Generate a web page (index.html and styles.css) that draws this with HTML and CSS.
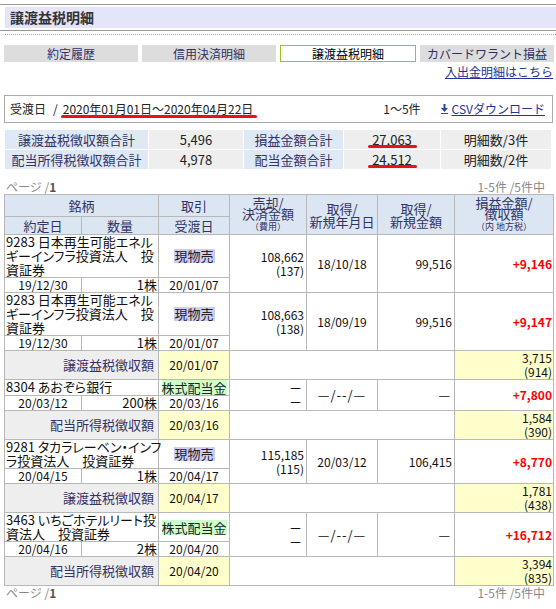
FILE: index.html
```html
<!DOCTYPE html>
<html lang="ja">
<head>
<meta charset="utf-8">
<title>譲渡益税明細</title>
<link rel="stylesheet" href="styles.css">
</head>
<body>
<div class="titlebar"><h1>譲渡益税明細</h1></div>
<div class="dots"></div>
<div class="content">
  <ul class="tabs">
    <li>約定履歴</li>
    <li>信用決済明細</li>
    <li class="active">譲渡益税明細</li>
    <li>カバードワラント損益</li>
  </ul>
  <div class="linkrow"><a href="#">入出金明細はこちら</a></div>

  <div class="datebox">
    <span class="period">受渡日<span class="slash">/</span><span class="mark date">2020年01月01日～2020年04月22日</span></span>
    <span class="count">1〜5件</span>
    <a class="csv" href="#"><svg class="dl" width="7" height="10" viewBox="0 0 7 10"><rect x="2.5" y="0" width="2" height="5" fill="#2a43a8"/><polygon points="0,4 7,4 3.5,8" fill="#2a43a8"/><rect x="0" y="9" width="7" height="1" fill="#2a43a8"/></svg><span class="csvtext">CSVダウンロード</span></a>
  </div>

  <table class="sum">
    <colgroup><col class="s1"><col class="s2"><col class="s3"><col class="s4"><col class="s5"></colgroup>
    <tr><th>譲渡益税徴収額合計</th><td>5,496</td><th>損益金額合計</th><td><span class="mark amt">27,063</span></td><td>明細数/3件</td></tr>
    <tr><th>配当所得税徴収額合計</th><td>4,978</td><th>配当金額合計</th><td><span class="mark amt">24,512</span></td><td>明細数/2件</td></tr>
  </table>

  <div class="pager top"><span>ページ /<b>1</b></span><span>1-5件 /5件中</span></div>

  <table class="list">
    <colgroup><col class="c1"><col class="c2"><col class="c3"><col class="c4"><col class="c5"><col class="c6"><col class="c7"></colgroup>
    <tr class="hr1">
      <th colspan="2">銘柄</th>
      <th>取引</th>
      <th rowspan="2" class="tight">売却/<br>決済金額<br><small>（費用）</small></th>
      <th rowspan="2">取得/<br>新規年月日</th>
      <th rowspan="2">取得/<br>新規金額</th>
      <th rowspan="2" class="tight">損益金額/<br>徴収額<br><small>（内 地方税）</small></th>
    </tr>
    <tr class="hr2"><th>約定日</th><th>数量</th><th>受渡日</th></tr>

    <tr class="item">
      <td colspan="2" class="name">9283 日本再生可能エネル<br>ギーインフラ投資法人　投<br>資証券</td>
      <td class="c"><span class="badge sell">現物売</span></td>
      <td rowspan="2" class="r num">108,662<br>(137)</td>
      <td rowspan="2" class="c num">18/10/18</td>
      <td rowspan="2" class="r num">99,516</td>
      <td rowspan="2" class="r profit">+9,146</td>
    </tr>
    <tr class="sub"><td class="c num">19/12/30</td><td class="r qty">1株</td><td class="c num">20/01/07</td></tr>

    <tr class="item">
      <td colspan="2" class="name">9283 日本再生可能エネル<br>ギーインフラ投資法人　投<br>資証券</td>
      <td class="c"><span class="badge sell">現物売</span></td>
      <td rowspan="2" class="r num">108,663<br>(138)</td>
      <td rowspan="2" class="c num">18/09/19</td>
      <td rowspan="2" class="r num">99,516</td>
      <td rowspan="2" class="r profit">+9,147</td>
    </tr>
    <tr class="sub"><td class="c num">19/12/30</td><td class="r qty">1株</td><td class="c num">20/01/07</td></tr>

    <tr class="tax">
      <td colspan="2" class="taxlabel">譲渡益税徴収額</td>
      <td class="c num yel">20/01/07</td>
      <td colspan="3"></td>
      <td class="r num yel">3,715<br>(914)</td>
    </tr>

    <tr class="item">
      <td colspan="2" class="name">8304 あおぞら銀行</td>
      <td class="c"><span class="badge div">株式配当金</span></td>
      <td rowspan="2" class="r dash">－<br>－</td>
      <td rowspan="2" class="c nodate">—/--/—</td>
      <td rowspan="2" class="r dash">—</td>
      <td rowspan="2" class="r profit">+7,800</td>
    </tr>
    <tr class="sub"><td class="c num">20/03/12</td><td class="r qty">200株</td><td class="c num">20/03/16</td></tr>

    <tr class="tax">
      <td colspan="2" class="taxlabel">配当所得税徴収額</td>
      <td class="c num yel">20/03/16</td>
      <td colspan="3"></td>
      <td class="r num yel">1,584<br>(390)</td>
    </tr>

    <tr class="item">
      <td colspan="2" class="name">9281 タカラレーベン・インフ<br>ラ投資法人　投資証券</td>
      <td class="c"><span class="badge sell">現物売</span></td>
      <td rowspan="2" class="r num">115,185<br>(115)</td>
      <td rowspan="2" class="c num">20/03/12</td>
      <td rowspan="2" class="r num">106,415</td>
      <td rowspan="2" class="r profit">+8,770</td>
    </tr>
    <tr class="sub"><td class="c num">20/04/15</td><td class="r qty">1株</td><td class="c num">20/04/17</td></tr>

    <tr class="tax">
      <td colspan="2" class="taxlabel">譲渡益税徴収額</td>
      <td class="c num yel">20/04/17</td>
      <td colspan="3"></td>
      <td class="r num yel">1,781<br>(438)</td>
    </tr>

    <tr class="item">
      <td colspan="2" class="name">3463 いちごホテルリート投<br>資法人　投資証券</td>
      <td class="c"><span class="badge div">株式配当金</span></td>
      <td rowspan="2" class="r dash">－<br>－</td>
      <td rowspan="2" class="c nodate">—/--/—</td>
      <td rowspan="2" class="r dash">—</td>
      <td rowspan="2" class="r profit">+16,712</td>
    </tr>
    <tr class="sub"><td class="c num">20/04/16</td><td class="r qty">2株</td><td class="c num">20/04/20</td></tr>

    <tr class="tax">
      <td colspan="2" class="taxlabel">配当所得税徴収額</td>
      <td class="c num yel">20/04/20</td>
      <td colspan="3"></td>
      <td class="r num yel">3,394<br>(835)</td>
    </tr>
  </table>

  <div class="pager bottom"><span>ページ /<b>1</b></span><span>1-5件 /5件中</span></div>
</div>
</body>
</html>
```

FILE: styles.css
```css
html, body {
  margin: 0;
  padding: 0;
  background: #fff;
}
body {
  width: 556px;
  font-family: "Noto Sans CJK JP", "Noto Sans", sans-serif;
  font-size: 12px;
  color: #222;
}

/* title */
.titlebar {
  margin-top: 4px;
  border-top: 1px solid #999;
  border-bottom: 1px solid #999;
  padding: 2px 0 2px 5px;
}
.titlebar h1 {
  margin: 0;
  height: 21px;
  line-height: 21px;
  padding-left: 5px;
  background: #e4e4fa;
  font-size: 14px;
  font-weight: bold;
  color: #333;
}
.dots {
  margin: 3px 0 0 5px;
  border-top: 1px dotted #aaa;
}

.content {
  padding: 0 3px 0 4px;
}

/* tabs */
.tabs {
  display: flex;
  gap: 4px;
  width: 550px;
  margin: 10px 0 0;
  padding: 0;
  list-style: none;
}
.tabs li {
  flex: 1;
  height: 17px;
  line-height: 17px;
  text-align: center;
  background: #dddddd;
  color: #2e2e66;
  font-size: 12px;
  box-sizing: border-box;
}
.tabs li.active {
  background: #fff;
  border: 1px solid #99c814;
  line-height: 15px;
  color: #000;
}

.linkrow {
  margin-top: 3px;
  text-align: right;
  line-height: 14px;
}
.linkrow a {
  color: #223399;
}

/* date box */
.datebox {
  margin-top: 16px;
  height: 28px;
  box-sizing: border-box;
  border: 1px solid #aaa;
  display: flex;
  align-items: center;
  padding: 0 7px 0 5px;
  line-height: 26px;
}
.period {
  flex: 1;
}
.slash {
  margin: 0 5px 0 7px;
}
.count {
  margin-right: 20px;
}
.csv {
  display: flex;
  align-items: center;
  color: #223399;
  text-decoration: none;
}
.csv .dl {
  margin-right: 4px;
}
.csvtext {
  text-decoration: underline;
  line-height: 14px;
}

.mark {
  position: relative;
}
.mark::after {
  content: "";
  position: absolute;
  height: 3px;
  border-radius: 2px;
  background: #e5131c;
}
.mark.date::after {
  left: -2px;
  right: -4px;
  bottom: -1px;
}
.mark.amt::after {
  left: -4px;
  right: -5px;
  bottom: 1px;
}

/* summary */
.sum {
  margin-top: 6px;
  border-spacing: 1px;
  table-layout: fixed;
  width: 548px;
  font-size: 13px;
}
.sum col.s1 { width: 143px; }
.sum col.s2 { width: 94px; }
.sum col.s3 { width: 99px; }
.sum col.s4 { width: 96px; }
.sum col.s5 { width: 110px; }
.sum th, .sum td {
  height: 19px;
  padding: 0;
  line-height: 19px;
  text-align: center;
}
.sum th {
  background: #dfe9f5;
  color: #333366;
  font-weight: normal;
}
.sum td {
  background: #eeeeee;
  color: #222;
}

/* pager */
.pager {
  display: flex;
  justify-content: space-between;
  line-height: 14px;
  color: #888;
  font-size: 12px;
  padding: 0 8px 0 2px;
}
.pager b {
  color: #555;
}
.pager.top {
  margin-top: 10px;
}

/* list */
.list {
  border-collapse: collapse;
  table-layout: fixed;
  width: 549px;
  font-size: 13px;
}
.list col.c1 { width: 77px; }
.list col.c2 { width: 77px; }
.list col.c3 { width: 71px; }
.list col.c4 { width: 77px; }
.list col.c5 { width: 71px; }
.list col.c6 { width: 77px; }
.list col.c7 { width: 99px; }
.list th, .list td {
  border: 1px solid #b8b8b8;
  padding: 0 2px;
  line-height: 14px;
}
.list th {
  background: #dce6f2;
  color: #333366;
  font-weight: normal;
  text-align: center;
  line-height: 13px;
}
.list th.tight {
  line-height: 11px;
}
.list th small {
  font-size: 9px;
  line-height: 10px;
}
.list tr.hr1 th {
  height: 21px;
}
.list tr.hr2 th {
  height: 17px;
}
.list td {
  color: #111;
}
.list .c { text-align: center; }
.list .r { text-align: right; }
.list .num { font-size: 12px; }
.list .qty { padding-right: 1px; }
.list .name {
  padding: 0 1px;
  white-space: nowrap;
  font-feature-settings: "palt";
  vertical-align: top;
}
.list .profit {
  color: #ff0000;
  font-weight: bold;
  font-size: 12px;
  padding-right: 1px;
}
.list .yel {
  background: #ffffcc;
}
.list td.r.yel {
  padding-right: 1px;
}
.list .taxlabel {
  background: #eeeeee;
  color: #333366;
  text-align: right;
  padding-right: 4px;
}
.list tr.tax td {
  height: 28px;
}
.list .dash {
  padding-right: 4px;
}
.list .nodate {
  letter-spacing: 1px;
}
.badge {
  display: inline-block;
  line-height: 14px;
  color: #222;
}
.badge.sell {
  background: #cdcdfa;
  padding: 0 1px;
}
.badge.div {
  background: #ccffcc;
  line-height: 15px;
}
```
